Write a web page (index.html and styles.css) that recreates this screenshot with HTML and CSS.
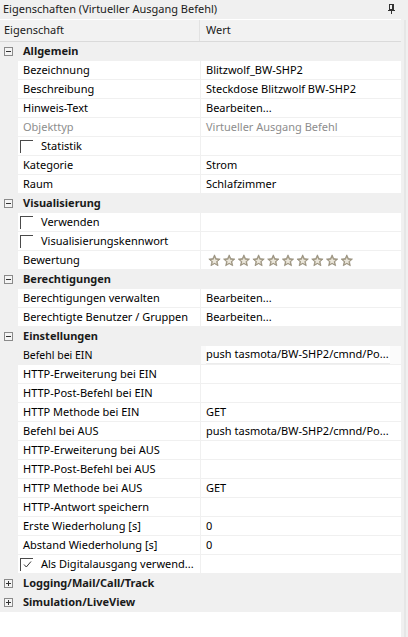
FILE: index.html
```html
<!DOCTYPE html>
<html lang="de">
<head>
<meta charset="utf-8">
<title>Eigenschaften</title>
<link rel="stylesheet" href="styles.css">
</head>
<body>
<div class="window">
  <div class="titlebar">
    <span class="title">Eigenschaften (Virtueller Ausgang Befehl)</span>
    <svg class="pin" width="8" height="10" viewBox="0 0 8 10">
      <rect x="1.5" y="0.5" width="4" height="5" fill="none" stroke="#333" stroke-width="1"/>
      <line x1="4.5" y1="0.5" x2="4.5" y2="5.5" stroke="#333" stroke-width="1"/>
      <line x1="0" y1="6.5" x2="7" y2="6.5" stroke="#333" stroke-width="1"/>
      <line x1="3.5" y1="6.5" x2="3.5" y2="10" stroke="#333" stroke-width="1"/>
    </svg>
  </div>
  <div class="body">
    <div class="grid">
      <div class="header">
        <div class="h-label">Eigenschaft</div>
        <div class="h-value">Wert</div>
      </div>

      <div class="group"><span class="toggle minus"></span>Allgemein</div>
      <div class="row"><div class="label">Bezeichnung</div><div class="value">Blitzwolf_BW-SHP2</div></div>
      <div class="row"><div class="label">Beschreibung</div><div class="value">Steckdose Blitzwolf BW-SHP2</div></div>
      <div class="row"><div class="label">Hinweis-Text</div><div class="value">Bearbeiten...</div></div>
      <div class="row disabled"><div class="label">Objekttyp</div><div class="value">Virtueller Ausgang Befehl</div></div>
      <div class="row"><div class="label"><span class="check"></span>Statistik</div><div class="value"></div></div>
      <div class="row"><div class="label">Kategorie</div><div class="value">Strom</div></div>
      <div class="row"><div class="label">Raum</div><div class="value">Schlafzimmer</div></div>

      <div class="group"><span class="toggle minus"></span>Visualisierung</div>
      <div class="row"><div class="label"><span class="check"></span>Verwenden</div><div class="value"></div></div>
      <div class="row"><div class="label"><span class="check"></span>Visualisierungskennwort</div><div class="value"></div></div>
      <div class="row"><div class="label">Bewertung</div><div class="value stars">
        <svg width="150" height="13" viewBox="0 0 150 13">
          <defs>
            <g id="star">
              <path d="M6.5 0.8 L8.2 4.6 L12.2 5 L9.2 7.7 L10.1 11.8 L6.5 9.7 L2.9 11.8 L3.8 7.7 L0.8 5 L4.8 4.6 Z" fill="#a59c86" stroke="#8a826e" stroke-width="0.6"/>
              <path d="M6.5 3.4 L7.5 5.8 L10 6 L8.1 7.6 L8.7 10.1 L6.5 8.8 L4.3 10.1 L4.9 7.6 L3 6 L5.5 5.8 Z" fill="#ebe7dc"/>
            </g>
          </defs>
          <use href="#star" x="0"/>
          <use href="#star" x="14.7"/>
          <use href="#star" x="29.4"/>
          <use href="#star" x="44.1"/>
          <use href="#star" x="58.8"/>
          <use href="#star" x="73.5"/>
          <use href="#star" x="88.2"/>
          <use href="#star" x="102.9"/>
          <use href="#star" x="117.6"/>
          <use href="#star" x="132.3"/>
        </svg>
      </div></div>

      <div class="group"><span class="toggle minus"></span>Berechtigungen</div>
      <div class="row"><div class="label">Berechtigungen verwalten</div><div class="value">Bearbeiten...</div></div>
      <div class="row"><div class="label">Berechtigte Benutzer / Gruppen</div><div class="value">Bearbeiten...</div></div>

      <div class="group"><span class="toggle minus"></span>Einstellungen</div>
      <div class="row selected"><div class="label">Befehl bei EIN</div><div class="value edit"><span class="edit-text">push tasmota/BW-SHP2/cmnd/Po...</span></div></div>
      <div class="row"><div class="label">HTTP-Erweiterung bei EIN</div><div class="value"></div></div>
      <div class="row"><div class="label">HTTP-Post-Befehl bei EIN</div><div class="value"></div></div>
      <div class="row"><div class="label">HTTP Methode bei EIN</div><div class="value">GET</div></div>
      <div class="row"><div class="label">Befehl bei AUS</div><div class="value">push tasmota/BW-SHP2/cmnd/Po...</div></div>
      <div class="row"><div class="label">HTTP-Erweiterung bei AUS</div><div class="value"></div></div>
      <div class="row"><div class="label">HTTP-Post-Befehl bei AUS</div><div class="value"></div></div>
      <div class="row"><div class="label">HTTP Methode bei AUS</div><div class="value">GET</div></div>
      <div class="row"><div class="label">HTTP-Antwort speichern</div><div class="value"></div></div>
      <div class="row"><div class="label">Erste Wiederholung [s]</div><div class="value">0</div></div>
      <div class="row"><div class="label">Abstand Wiederholung [s]</div><div class="value">0</div></div>
      <div class="row"><div class="label"><span class="check checked"><svg width="11" height="11" viewBox="0 0 11 11"><path d="M2 5.5 L4.3 8 L9 2.5" fill="none" stroke="#333" stroke-width="1"/></svg></span>Als Digitalausgang verwend...</div><div class="value"></div></div>

      <div class="group"><span class="toggle plus"></span>Logging/Mail/Call/Track</div>
      <div class="group"><span class="toggle plus"></span>Simulation/LiveView</div>
      <div class="filler"></div>
    </div>
    <div class="scroll"></div>
  </div>
</div>
</body>
</html>
```

FILE: styles.css
```css
html, body {
  margin: 0;
  padding: 0;
}
body {
  width: 408px;
  height: 637px;
  overflow: hidden;
  background: #f0f0f0;
  font-family: "Noto Sans", "Open Sans", sans-serif;
  font-size: 11px;
  color: #000000;
}
.window {
  display: flex;
  flex-direction: column;
  height: 637px;
}
.titlebar {
  height: 19px;
  display: flex;
  align-items: center;
  justify-content: space-between;
  padding: 0 12px 0 3px;
  box-sizing: border-box;
  background: #f0f0f0;
}
.title {
  line-height: 19px;
  margin-top: -2px;
  color: #1a1a1a;
}
.pin {
  display: block;
  margin-top: -2px;
}
.body {
  flex: 1;
  display: flex;
}
.grid {
  width: 401px;
  display: flex;
  flex-direction: column;
}
.scroll {
  width: 7px;
  box-sizing: border-box;
  margin-top: 1px;
  border-right: 2px solid #f0f0f0;
  border-left: 3px solid #f0f0f0;
  background: #e6e6e6;
}
.header {
  height: 23px;
  box-sizing: border-box;
  border-top: 1px solid #ffffff;
  border-bottom: 1px solid #dadada;
  display: flex;
  align-items: center;
  background: #f2f2f2;
}
.h-label {
  width: 200px;
  box-sizing: border-box;
  padding-left: 4px;
  padding-bottom: 1px;
  border-right: 1px solid #e2e2e2;
  line-height: 20px;
  color: #1a1a1a;
}
.h-value {
  padding-left: 6px;
  padding-bottom: 1px;
  line-height: 20px;
  color: #1a1a1a;
}
.group {
  height: 18px;
  margin-bottom: 1px;
  box-sizing: border-box;
  padding-bottom: 1px;
  display: flex;
  align-items: center;
  font-weight: bold;
  padding-left: 4px;
  color: #1a1a1a;
}
.toggle {
  width: 9px;
  height: 9px;
  box-sizing: border-box;
  border: 1px solid #8a8a8a;
  margin-right: 10px;
  margin-top: 1px;
  position: relative;
  background: #f4f4f4;
}
.toggle::before {
  content: "";
  position: absolute;
  left: 1px;
  top: 3px;
  width: 5px;
  height: 1px;
  background: #333;
}
.toggle.plus::after {
  content: "";
  position: absolute;
  left: 3px;
  top: 1px;
  width: 1px;
  height: 5px;
  background: #333;
}
.row {
  height: 18px;
  margin-bottom: 1px;
  display: flex;
  padding-left: 18px;
}
.label {
  width: 182px;
  background: #ffffff;
  padding-left: 5px;
  padding-bottom: 1px;
  box-sizing: border-box;
  display: flex;
  align-items: center;
  white-space: nowrap;
  overflow: hidden;
}
.value {
  width: 200px;
  margin-left: 1px;
  background: #ffffff;
  padding-left: 5px;
  padding-bottom: 1px;
  box-sizing: border-box;
  display: flex;
  align-items: center;
  white-space: nowrap;
  overflow: hidden;
}
.disabled .label,
.disabled .value {
  color: #8d8d8d;
}
.check {
  width: 13px;
  height: 13px;
  box-sizing: border-box;
  border-top: 1px solid #4a4a4a;
  border-left: 1px solid #4a4a4a;
  margin-left: -3px;
  margin-right: 8px;
  margin-top: 1px;
  display: flex;
  align-items: center;
  justify-content: center;
  background: #ffffff;
  flex: none;
}
.check svg {
  display: block;
}
.stars {
  padding-bottom: 0;
}
.stars svg {
  display: block;
  margin-left: 2px;
}
.selected .label {
  background: transparent;
  font-size: 10.5px;
}
.selected .value.edit {
  background: #fbfbfb;
  padding-right: 11px;
  padding-bottom: 0;
}
.edit-text {
  background: #ffffff;
  flex: 1;
  height: 17px;
  line-height: 16px;
  border-bottom: 1px solid #ececec;
  overflow: hidden;
}
.filler {
  flex: 1;
  background: #ffffff;
}
```
